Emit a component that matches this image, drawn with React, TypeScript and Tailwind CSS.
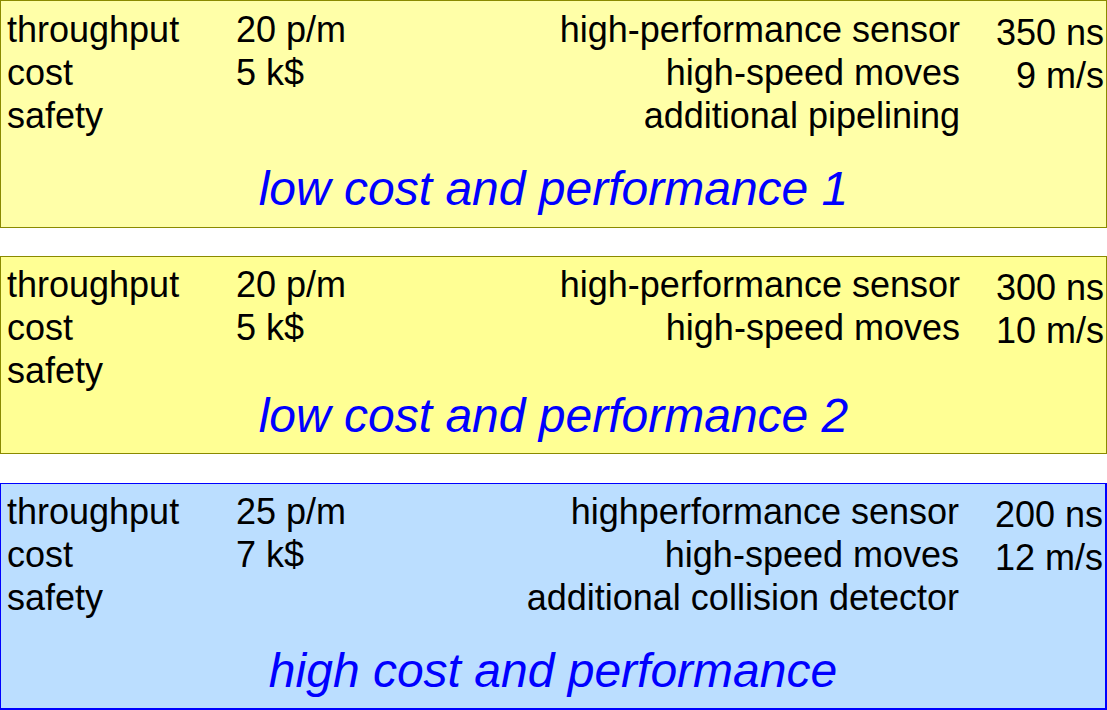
type Row = [string, string, string, string];

type Panel = {
  rows: Row[];
  title: string;
  box: string;
  lines: string;
  titleClass: string;
};

const panels: Panel[] = [
  {
    rows: [
      ["throughput", "20 p/m", "high-performance sensor", "350 ns"],
      ["cost", "5 k$", "high-speed moves", "9 m/s"],
      ["safety", "", "additional pipelining", ""],
    ],
    title: "low cost and performance 1",
    box: "h-[228px] bg-[#ffffa8] border border-[#8a8a00]",
    lines: "pt-[7px]",
    titleClass: "mt-[24px]",
  },
  {
    rows: [
      ["throughput", "20 p/m", "high-performance sensor", "300 ns"],
      ["cost", "5 k$", "high-speed moves", "10 m/s"],
      ["safety", "", "", ""],
    ],
    title: "low cost and performance 2",
    box: "mt-[28px] h-[198px] bg-[#ffff94] border border-[#8a8a00]",
    lines: "pt-[6px]",
    titleClass: "-mt-[4px]",
  },
  {
    rows: [
      ["throughput", "25 p/m", "highperformance sensor", "200 ns"],
      ["cost", "7 k$", "high-speed moves", "12 m/s"],
      ["safety", "", "additional collision detector", ""],
    ],
    title: "high cost and performance",
    box: "mt-[29px] h-[227px] bg-[#bbdeff] border border-r-2 border-b-2 border-[#0000ff]",
    lines: "pt-[6px]",
    titleClass: "mt-[24px]",
  },
];

function Box({ p }: { p: Panel }) {
  return (
    <div className={`box-border w-[1107px] ${p.box}`}>
      <div className={`grid grid-cols-[229px_1fr_auto_144px] pl-[6px] pr-[2px] ${p.lines}`}>
        {p.rows.map((r, i) => (
          <div key={i} className="contents">
            <div>{r[0]}</div>
            <div>{r[1]}</div>
            <div className="text-right">{r[2]}</div>
            <div className="text-right translate-y-[3px]">{r[3]}</div>
          </div>
        ))}
      </div>
      <div
        className={`text-center italic text-[48px] leading-[56px] text-[#0000ff] ${p.titleClass}`}
      >
        {p.title}
      </div>
    </div>
  );
}

export default function App() {
  return (
    <div
      className="w-[1107px] h-[710px] bg-white text-black text-[36px] leading-[43px] overflow-hidden"
      style={{ fontFamily: '"Liberation Sans", Arial, sans-serif' }}
    >
      {panels.map((p, i) => (
        <Box key={i} p={p} />
      ))}
    </div>
  );
}
